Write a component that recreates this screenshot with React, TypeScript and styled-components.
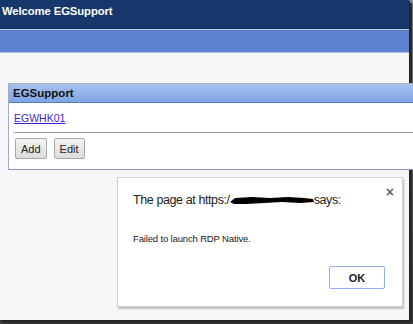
import styled, { createGlobalStyle } from "styled-components";

const Global = createGlobalStyle`
  html, body {
    margin: 0;
    padding: 0;
    background: #3c3c3c;
  }
  body {
    width: 413px;
    height: 324px;
    overflow: hidden;
    font-family: "Liberation Sans", Arial, sans-serif;
  }
`;

const Frame = styled.div`
  width: 413px;
  height: 324px;
  background: linear-gradient(180deg, #8a8a8a 0%, #3a3a3a 100%);
  position: relative;
  overflow: hidden;
`;

const Page = styled.div`
  width: 409px;
  height: 320px;
  background: #f7f7f7;
  display: flex;
  flex-direction: column;
  box-shadow: 1px 1px 0 #222, 3px 3px 1px #2a2a2a;
`;

const TopBar = styled.div`
  height: 30px;
  background: #17366b;
  color: #fff;
  font-weight: bold;
  font-size: 11.3px;
  letter-spacing: -0.1px;
  padding-left: 2px;
  display: flex;
  align-items: flex-start;
  padding-top: 5px;
  box-sizing: border-box;
  border-bottom: 1px solid #b9c6dc;
`;

const NavBand = styled.div`
  height: 22px;
  background: #5e80d0;
  border-bottom: 1px solid #a9bde8;
`;

const Panel = styled.div`
  margin: 30px 0 0 8px;
  width: 410px;
  border: 1px solid #a4abc2;
  border-bottom-color: #8c93bf;
  background: #fff;
`;

const PanelHead = styled.div`
  height: 18px;
  background: linear-gradient(180deg, #a6c3ee 0%, #7ea5e4 100%);
  border-bottom: 1px solid #5a7cc4;
  font-size: 11.5px;
  font-weight: bold;
  color: #111;
  padding-left: 4px;
  display: flex;
  align-items: center;
`;

const LinkRow = styled.div`
  margin: 0 5px;
  padding: 5px 0 6px 0;
  border-bottom: 1px solid #9a9a9a;
`;

const Link = styled.a`
  font-size: 10.5px;
  color: #3b1fd8;
  text-decoration: underline;
`;

const ButtonRow = styled.div`
  display: flex;
  gap: 7px;
  padding: 5px 0 10px 6px;
`;

const Button = styled.button`
  height: 21px;
  padding: 0 5px;
  font-family: "Liberation Sans", Arial, sans-serif;
  font-size: 11px;
  color: #222;
  background: linear-gradient(180deg, #f4f4f4 0%, #dcdcdc 100%);
  border: 1px solid #a8a8a8;
  border-radius: 2px;
`;

const Dialog = styled.div`
  position: absolute;
  left: 117px;
  top: 177px;
  width: 286px;
  height: 130px;
  box-sizing: border-box;
  background: #fff;
  border: 1px solid #cfcfcf;
  box-shadow: 1px 2px 2px rgba(0, 0, 0, 0.25);
  padding: 15px 15px 0 15px;
  display: flex;
  flex-direction: column;
`;

const Close = styled.span`
  position: absolute;
  right: 8px;
  top: 6px;
  font-size: 14px;
  font-weight: bold;
  color: #666;
`;

const Title = styled.div`
  font-size: 12.5px;
  color: #222;
  letter-spacing: -0.4px;
  display: flex;
  align-items: center;
  white-space: nowrap;
`;

const Message = styled.div`
  margin-top: 26px;
  font-size: 9.5px;
  color: #222;
  letter-spacing: -0.15px;
`;

const Actions = styled.div`
  margin-top: 22px;
  display: flex;
  justify-content: flex-end;
  padding-right: 2px;
`;

const OkButton = styled.button`
  width: 56px;
  height: 23px;
  font-family: "Liberation Sans", Arial, sans-serif;
  font-size: 11px;
  font-weight: bold;
  color: #222;
  background: #fff;
  border: 1px solid #8fb1f2;
  border-radius: 2px;
`;

const Redacted = () => (
  <svg width="84" height="12" viewBox="0 0 84 12">
    <path
      d="M0 8 L5 4 L22 3 L40 4 L58 3 L74 4 L83 5 L84 8 L70 9 L52 8 L34 9 L16 10 L4 10 Z"
      fill="#000"
    />
  </svg>
);

export default function App() {
  return (
    <Frame>
      <Global />
      <Page>
        <TopBar>Welcome EGSupport</TopBar>
        <NavBand />
        <Panel>
          <PanelHead>EGSupport</PanelHead>
          <LinkRow>
            <Link href="#">EGWHK01</Link>
          </LinkRow>
          <ButtonRow>
            <Button>Add</Button>
            <Button>Edit</Button>
          </ButtonRow>
        </Panel>
      </Page>
      <Dialog>
        <Close>×</Close>
        <Title>
          The page at https:/
          <Redacted />
          says:
        </Title>
        <Message>Failed to launch RDP Native.</Message>
        <Actions>
          <OkButton>OK</OkButton>
        </Actions>
      </Dialog>
    </Frame>
  );
}
